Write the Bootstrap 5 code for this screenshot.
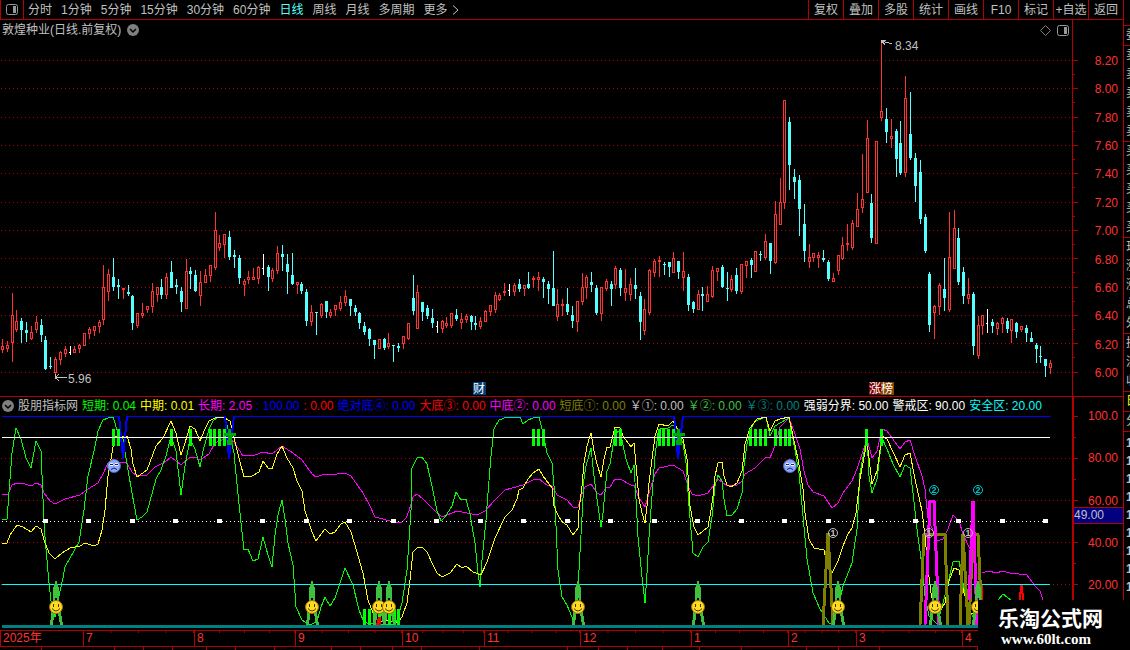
<!DOCTYPE html>
<html lang="zh-CN">
<head>
<meta charset="utf-8">
<meta name="viewport" content="width=device-width, initial-scale=1">
<title>敦煌种业 日线</title>
<link href="https://cdn.jsdelivr.net/npm/bootstrap@5.3.0/dist/css/bootstrap.min.css" rel="stylesheet">
<style>
:root{--line:#b40000;--ink:#c0c0c0;--up:#ff3232;--down:#54ffff}
body{background:#000;color:var(--ink);font:12px/16px "Liberation Sans","Noto Sans CJK SC",sans-serif;overflow:hidden}
.flat{background:none;border:0;padding:0;color:inherit;font:inherit;white-space:nowrap}
.topbar{height:20px;border-bottom:1px solid var(--line)}
.topbar .panelbtn{width:24px;border:1px solid var(--line);border-width:0 1px}
.periods{gap:9px;padding-left:4px}
.periods .on{color:var(--down)}
.tools .flat{width:35px;border-left:1px solid var(--line)}
.titlebar{height:18px;padding:2px 3px 0 2px;gap:6px}
.plot{min-width:0}
svg{display:block}
.plot>svg{width:100%;height:auto;overflow:visible;shape-rendering:crispEdges}
.plot text{font-size:12px}
.scale{width:51px;flex:none;border-left:1px solid var(--line);color:var(--up);text-align:right;line-height:12px}
.pricescale{padding:35px 5px 17px 0}
.indscale{border-left-width:2px;padding:13px 5px 39px 0}
.indicator{border-top:1px solid var(--line)}
.legend{height:17px;gap:4px;padding-left:2px;white-space:nowrap}
.cursor{top:110px;left:0;right:0;height:17px;line-height:15px;background:#000080;border:1px solid var(--line);border-width:1px 0;color:var(--ink);text-align:left}
.dates{height:17px;border:1px solid var(--line);border-width:1px 0;grid-template-columns:83fr 111fr 101fr 107fr 82fr 96fr 111fr 97fr 68fr 106fr 161fr;color:var(--up);line-height:15px}
.dates>span{border-left:1px solid var(--line);padding-left:2px;background:linear-gradient(to left,var(--line) 1px,transparent 1px) 0 0/25% 2px repeat-x}
.dates>span:first-child{background:none}
.foot{height:3px}
.foot i{border-right:1px solid var(--line)}
.side{width:7px;flex:none;border-left:1px solid var(--line);overflow:hidden;padding-top:25px}
.side>div{border-top:1px solid var(--line);padding-left:2px;width:20px;line-height:19px}
.side .one{line-height:18px;padding-top:2px;font-weight:bold}
.brand{right:0;bottom:0;width:152px;height:50px;background:#000;color:#fff;padding:6px 0 0 20px}
.brand .cn{font-size:21px;line-height:26px;font-weight:bold}
.brand .en{font:bold 15px/14px "Liberation Serif",serif;padding-left:3px}
</style>
</head>
<body>
<div class="d-flex position-relative">
<main class="flex-grow-1 plot">
  <nav class="topbar d-flex" aria-label="周期">
    <button class="flat panelbtn d-flex align-items-center justify-content-center" aria-label="面板"><svg width="12" height="11"><rect x=".5" y=".5" width="11" height="10" rx="2" fill="none" stroke="#999"/><path d="M7 2h3v7H7z" fill="#999"/></svg></button>
    <div class="periods d-flex align-items-center">
      <button class="flat">分时</button><button class="flat">1分钟</button><button class="flat">5分钟</button><button class="flat">15分钟</button><button class="flat">30分钟</button><button class="flat">60分钟</button><button class="flat on">日线</button><button class="flat">周线</button><button class="flat">月线</button><button class="flat">多周期</button><button class="flat d-flex align-items-center">更多<svg class="ms-1" width="7" height="10"><path d="M1 .5 6 5 1 9.500" fill="none" stroke="#c0c0c0"/></svg></button>
    </div>
    <div class="tools d-flex ms-auto">
      <button class="flat">复权</button><button class="flat">叠加</button><button class="flat">多股</button><button class="flat">统计</button><button class="flat">画线</button><button class="flat">F10</button><button class="flat">标记</button><button class="flat">+自选</button><button class="flat">返回</button>
    </div>
  </nav>

  <section class="d-flex">
    <div class="plot flex-grow-1">
      <div class="titlebar d-flex align-items-center">
        <span>敦煌种业(日线.前复权)</span>
        <button class="flat" aria-label="展开"><svg width="12" height="12"><circle cx="6" cy="6" r="6" fill="#808080"/><path d="M3 5l3 3 3-3" fill="none" stroke="#000" stroke-width="1.500"/></svg></button>
        <button class="flat ms-auto" aria-label="标志"><svg width="11" height="11"><path d="M5.500.5l5 5-5 5-5-5z" fill="none" stroke="#808080"/></svg></button>
        <button class="flat" aria-label="侧栏"><svg width="12" height="11"><rect x=".5" y=".5" width="11" height="10" rx="2" fill="none" stroke="#999"/><path d="M7 2h3v7H7z" fill="#999"/></svg></button>
      </div>
      <svg id="price" viewBox="0 38 1072 358" role="img" aria-label="日K线图">
        <g id="grid"></g><g id="candles"></g>
        <g fill="none" stroke="#c0c0c0"><path d="M881.500 43v-3M881 40.500h5M881 40.500l4 4M882 41l10 3"/><path d="M55.500 374v5M55 377.500h12M55 377.500l4-3M55 377.500l4 3"/></g>
        <g fill="#c0c0c0"><text x="895" y="50">8.34</text><text x="68" y="383">5.96</text></g>
        <path d="M473 382h12l1 1v12h-13z" fill="#003c78"/><path d="M869 382h12v13h-12z" fill="#800000"/><path d="M881 382h12l1 1v12h-13z" fill="#8a4500"/>
        <g fill="#fff"><text x="473" y="393">财</text><text x="869" y="393">涨</text><text x="881" y="393">榜</text></g>
      </svg>
    </div>
    <div class="scale pricescale d-flex flex-column justify-content-between">
      <span>8.20</span><span>8.00</span><span>7.80</span><span>7.60</span><span>7.40</span><span>7.20</span><span>7.00</span><span>6.80</span><span>6.60</span><span>6.40</span><span>6.20</span><span>6.00</span>
    </div>
  </section>

  <section class="indicator d-flex">
    <div class="plot flex-grow-1">
      <div class="legend d-flex align-items-center">
        <span class="d-flex align-items-center"><button class="flat me-1" aria-label="指标菜单"><svg width="12" height="12"><circle cx="6" cy="6" r="6" fill="#808080"/><path d="M3 5l3 3 3-3" fill="none" stroke="#000" stroke-width="1.500"/></svg></button>股朋指标网</span>
        <span style="color:#0f0">短期: 0.04</span><span style="color:#ff0">中期: 0.01</span><span style="color:#f0f">长期: 2.05</span><span style="color:#00f">: 100.00</span><span style="color:#f00">: 0.00</span><span style="color:#00f">绝对底④: 0.00</span><span style="color:#f00">大底③: 0.00</span><span style="color:#f0f">中底②: 0.00</span><span style="color:#808000">短底①: 0.00</span><span>￥①: 0.00</span><span style="color:#40c040">￥②: 0.00</span><span style="color:#008080">￥③: 0.00</span><span style="color:#fff">强弱分界: 50.00</span><span style="color:#fff">警戒区: 90.00</span><span style="color:#0ff">安全区: 20.00</span>
      </div>
      <svg id="osc" viewBox="0 414 1072 216" role="img" aria-label="指标图">
        <defs>
          <g id="legs" fill="#40c040"><path d="M-1 581h2v3h1v3h1v11l1 8h-3v-8h-2v8h-3l1-8v-11h1v-3h1z"/><path d="M-4 606h3l-2 19h-3zM4 606h-3l3 19h3z"/></g>
          <g id="smile" shape-rendering="auto"><circle r="6.500" fill="#ffdc20" stroke="#9a6a10"/><path d="M-3-3h1v3h-1zM2-3h1v3h-1z" fill="#403000"/><path d="M-4 1.500q4 5 8 0" fill="none" stroke="#403000"/></g>
          <g id="frown" shape-rendering="auto"><circle r="6.500" fill="#8ca8ff" stroke="#5068b8"/><ellipse cx="-2.500" cy="-1.500" rx="2" ry="1.500" fill="#fff"/><ellipse cx="2.500" cy="-1.500" rx="2" ry="1.500" fill="#fff"/><path d="M-4-2h3v1h-3zM1-2h3v1h-3z" fill="#102060"/><path d="M-3 3.500q3-3 6 0" fill="none" stroke="#102060"/></g>
        </defs>
        <path d="M1 458.500h1071M1 500.500h1071M1 542.500h1071M1 584.500h1071" stroke="#b40000" stroke-dasharray="1 3"/>
        <g id="lines" fill="none" stroke-linejoin="round">
          <path d="M2 416.500h116M127 416.500h97M234 416.500h439M683 416.500h368" stroke="#00f"/>
          <path d="M119 416l4 42 4-42M225 416l4 42 5-42M674 416l4 42 5-42" stroke="#00f" stroke-width="2"/>
        </g>
        <g id="bars" fill="#0f0"></g>
        <path d="M2 437.500h1048" stroke="#fff"/>
        <path d="M2 521.500h1048" stroke="#fff" stroke-dasharray="1 3"/>
        <g id="squares" fill="#fff"></g>
        <g fill="#0a0"><path d="M228 429h3v4h5v3h-4l1 9h-6l1-9h-4v-3h4zM677 429h3v4h5v3h-4l1 9h-6l1-9h-4v-3h4z"/></g>
        <path d="M2 584.500h1048" stroke="#0ff"/>
        <path d="M376 625l2-8h3v8zM1019 600l1-15h3l1 15h-2v-6h-1v6zM981 585h2v15h-2z" fill="#f00"/>
        <g fill="none" stroke-width="3"><path d="M823 625l5-92 5 92M920 625l4-91h21l3 91M960 625l3-91 5 91M969 625l4-91h5l4 91" stroke="#808000"/><path d="M925 625l5-124h4l5 124M969 600l4-99 4 124" stroke="#f0f"/></g>
        <g id="figures"></g>
        <use href="#frown" x="114" y="466"/><use href="#frown" x="790" y="466"/>
        <path d="M2 625h1048v3H2z" fill="#008080"/>
        <g id="marks" fill="none" shape-rendering="auto"></g>
      </svg>
    </div>
    <div class="scale indscale position-relative d-flex flex-column justify-content-between">
      <span>100.0</span><span>80.00</span><span>60.00</span><span>40.00</span><span>20.00</span>
      <div class="cursor position-absolute">49.00</div>
    </div>
  </section>

  <div class="dates d-grid">
    <span>2025年</span><span>7</span><span>8</span><span>9</span><span>10</span><span>11</span><span>12</span><span>1</span><span>2</span><span>3</span><span>4</span>
  </div>
  <div class="foot d-flex" id="foot" aria-hidden="true"></div>
</main>
<aside class="side" aria-label="盘口">
  <div>委</div><div>卖<br>卖<br>卖<br>卖<br>卖</div><div>买<br>买<br>买<br>买<br>买</div><div>现<br>涨<br>涨<br>总<br>外</div><div>换<br>流<br>收</div><div style="color:#ff0">日</div><div>分</div><div class="one">1<br>1<br>1<br>1<br>1<br>1<br>1<br>1<br>1</div>
</aside>
<div class="brand position-absolute"><div class="cn">乐淘公式网</div><div class="en">www.60lt.com</div></div>
</div>

<script src="https://cdn.jsdelivr.net/npm/bootstrap@5.3.0/dist/js/bootstrap.bundle.min.js"></script>
<script>
const $ = id => document.getElementById(id);
const barX = i => Math.floor(2.5 + 4.83 * i);

// Grid lines and scale ticks
const levels = [60,88,117,145,173,202,230,258,287,315,343,372];
$('grid').innerHTML = `<path d="${levels.map(y => `M1 ${y}.5H1072`).join('')}" stroke="#b40000" stroke-dasharray="1 3"/>` +
  `<path d="${levels.map((y,i) => `M1073 ${y}.5h5` + (i < 11 ? `M1073 ${y+14}.5h2` : '')).join('')}" stroke="#b40000"/>`;

// One candle: colour, then high, body top, body bottom, low
const candles = `r339,346,350,353 r341,345,349,352 r293,315,343,362 r310,321,330,332 c318,321,330,343 c322,330,333,342 r326,332,339,340 r316,322,330,333 c319,325,335,342 c336,340,369,370
c357,366,367,369 r357,359,373,376 r351,352,360,365 r346,349,354,357 w346,352,353,355 r346,349,353,353 r344,345,349,353 r333,333,346,346 r327,329,334,339 r326,326,331,336
r320,322,327,333 r265,287,320,325 r269,274,292,301 c258,277,287,291 c279,285,287,299 r288,288,290,299 c285,292,294,296 c295,296,323,330 r313,313,326,328 r303,313,316,318
r306,306,310,313 r283,291,307,313 r287,287,295,302 c279,287,295,299 r273,277,295,299 c261,272,288,288 c279,285,287,294 c287,291,302,312 r259,271,309,309 c267,271,274,289
c270,275,291,292 r271,282,296,306 r269,275,283,283 r265,265,276,282 r212,230,268,270 r235,243,248,251 r234,234,245,258 c231,237,257,260 c250,255,257,268 c255,258,278,284
r279,281,285,296 r271,277,280,284 r268,277,280,280 r266,267,279,284 w254,268,269,275 c265,267,277,291 r268,270,279,282 r246,253,271,274 c245,254,257,271 c254,264,272,294
c253,275,284,285 r282,282,285,294 c282,284,291,294 c289,292,321,326 r305,312,322,326 c312,312,313,335 r303,304,316,318 c301,301,312,318 r309,312,316,318 r305,305,310,316
r296,302,309,311 r290,296,303,306 c299,299,306,316 c305,308,312,316 c312,313,323,329 c322,326,332,335 c328,329,339,346 c340,340,345,359 r339,339,349,349 c338,339,348,350
r333,343,347,349 c345,345,346,362 c343,346,348,352 r336,336,344,349 r323,323,339,340 c275,298,311,315 r285,292,329,329 c302,302,312,321 c305,308,316,319 c309,318,323,328
w321,326,327,333 r320,321,329,333 r317,323,326,328 r313,313,326,328 c309,315,319,321 r313,319,323,329 r314,316,320,323 c315,316,322,330 c316,323,325,330 r317,321,327,329
r310,311,322,322 r305,305,312,316 r292,295,310,313 r293,295,300,301 r283,291,293,296 w284,290,291,296 r283,285,292,296 c279,284,289,292 r285,285,289,296 c272,284,288,289
r276,278,280,288 r272,277,280,291 c277,279,282,298 c281,284,289,304 c251,288,306,306 r289,304,317,321 r299,304,306,316 c288,304,312,315 c306,315,321,328 r301,301,322,332
r273,287,302,305 r275,277,288,299 c272,282,285,292 c285,288,313,315 r287,287,314,321 r279,281,289,291 c281,284,289,306 r266,268,285,289 c268,270,288,296 r269,288,293,301
r278,284,295,301 c268,285,289,299 c292,296,322,340 r299,309,331,335 r269,270,313,315 r259,261,273,277 r256,260,262,277 c262,264,265,275 c262,262,267,277 r252,258,273,273
c261,261,272,279 r252,271,278,291 c274,277,305,311 c301,302,309,313 r290,294,310,310 c287,294,296,311 r286,294,302,302 r266,270,297,298 r268,268,272,281 c265,267,287,288
c272,288,289,301 r275,279,290,292 c268,275,291,294 r264,264,292,294 r261,261,266,278 c258,260,265,278 r251,251,272,272 c251,254,255,261 r234,241,258,260 c243,243,261,274
r201,214,263,264 r178,202,225,225 r100,100,203,209 c117,122,165,190 c169,177,182,199 c175,180,209,236 c204,224,251,262 r244,257,262,268 r253,253,258,262 r252,255,258,268
c250,258,260,262 c260,262,279,281 r273,278,282,282 r255,255,271,275 r237,245,259,260 r224,243,245,251 r220,223,248,250 r193,209,227,227 r154,199,208,213 r120,138,193,193
c194,203,238,243 r141,141,244,244 r43,111,118,121 c108,119,132,143 r119,136,139,148 c129,131,159,177 c121,143,173,175 r76,98,173,177 c92,134,158,160 c153,158,186,202
c160,172,219,224 c214,217,251,253 c272,274,325,332 r305,306,313,339 r283,285,307,315 c258,289,298,311 r212,257,310,312 r210,228,269,269 c228,238,282,285 c267,272,296,304
r278,294,299,304 c292,294,346,355 r316,325,356,359 r315,315,326,335 w309,323,324,333 c319,322,326,333 r322,323,329,335 r317,318,324,333 c318,321,329,333 r319,319,331,343
c322,323,332,338 r326,326,330,332 c325,328,333,342 c332,338,342,342 c343,345,349,363 c346,356,357,363 c359,359,366,377 r360,363,368,374`.split(/\s+/);
const ink = {r:'#ff3232', c:'#54ffff', w:'#ffffff'};
$('candles').innerHTML = candles.map((s, i) => {
  const k = s[0], [h, t, b, l] = s.slice(1).split(',').map(Number), x = barX(i), f = ink[k];
  if (k === 'w') return `<path d="M${x} ${h}h1V${l}h-1zM${x-1} ${t}h1v1h-1z" fill="${f}"/>`;
  if (k === 'c') return `<path d="M${x} ${h}h1V${l}h-1zM${x-1} ${t}h3V${b}h-3z" fill="${f}"/>`;
  return `<path d="M${x} ${h}h1V${t}h-1zM${x} ${b}h1V${l}h-1z" fill="${f}"/><path d="M${x-.5} ${t+.5}h2V${Math.max(b-.5,t+.5)}h-2z" fill="none" stroke="${f}"/>`;
}).join('');

// Oscillator curves
const curves = {
 '#f0f': ['2,494 8,494 12,485 17,483 22,483 31,486 36,483 41,485 44,493 50,501 55,504 65,499 80,495 88,489 98,483 103,474 108,463 113,459 119,462 127,463 132,472 137,476 147,475 155,467 165,462 171,457 181,465 190,457 195,457 200,460 209,454 215,443 229,437 234,442 243,456 255,455 263,452 272,454 282,446 293,453 302,460 312,474 316,477 325,474 330,475 345,473 351,476 363,493 370,506 375,517 383,519 393,522 402,522 406,518 409,511 413,497 417,494 423,499 437,513 442,517 457,511 477,515 485,511 494,501 505,490 523,485 533,480 539,479 547,485 552,486 557,495 567,500 573,507 578,507 582,494 585,487 591,484 597,493 601,495 606,488 610,487 615,479 620,479 631,485 634,485 638,496 645,507 649,493 655,474 659,468 673,465 683,471 688,486 692,494 698,496 708,493 713,486 718,479 727,486 737,485 742,481 745,474 755,468 766,457 770,458 775,446 780,427 789,418 795,434 800,449 804,471 808,485 813,492 824,496 832,508 838,503 843,493 852,481 857,469 862,454 867,439 872,458 877,451 882,429 887,431 900,449 905,442 910,440 915,456 922,476 925,489 928,518 935,536 937,541 943,539 948,529 953,515 959,521 963,534 970,549', '982,573 988,571 997,573 1002,571 1010,573 1027,575 1035,586 1040,591 1043,600'],
 '#0f0': ['2,519 7,519 12,453 16,428 21,439 26,458 31,468 36,441 41,451 44,523 45,537 49,583 51,601 55,617 58,600 63,578 65,567 70,558 79,542 84,510 88,476 94,451 98,431 103,420 108,418 113,417 118,433 123,439 127,464 132,493 137,520 142,517 147,512 156,479 161,470 166,456 171,436 176,451 181,495 185,466 190,439 195,449 200,467 203,451 209,429 213,421 218,417 225,417 229,433 234,453 237,484 241,523 244,550 248,549 253,561 258,559 263,537 268,555 272,567 275,535 278,515 282,500 285,519 288,543 293,565 296,607 302,620 309,625 317,622 321,607 325,597 330,606 335,598 345,568 353,585 359,610 363,620 367,623 380,624 395,624 397,620 402,603 407,570 411,510 412,468 417,458 422,457 427,464 432,486 437,511 441,521 445,517 452,506 456,492 461,500 466,499 470,514 472,526 475,543 478,573 480,587 482,560 486,520 488,493 491,456 494,429 499,420 507,417 520,417 523,424 528,420 533,418 539,417 543,433 547,453 552,463 554,486 556,526 558,570 562,597 567,605 572,617 574,622 577,610 579,570 582,517 584,479 586,466 591,448 594,476 597,499 601,527 603,513 607,471 610,464 615,433 620,431 626,459 631,473 634,465 636,499 638,537 642,577 645,603 647,573 649,537 652,496 655,456 658,433 661,428 668,428 673,425 677,429 683,443 686,463 689,506 693,553 698,557 703,547 708,542 712,517 715,486 718,475 722,481 724,499 727,516 732,515 737,509 742,493 744,466 747,444 751,429 755,421 766,417 770,436 775,426 780,423 789,418 793,439 799,473 803,516 807,559 813,593 820,609 829,623 832,624 838,609 843,586 852,563 857,529 860,473 867,436 869,476 872,493 877,479 882,438 887,449 893,464 900,477 905,465 910,468 913,493 917,529 922,566 925,596 929,616 937,624 943,603 948,583 953,562 959,561 964,589 968,609 975,620', '998,600 1003,594 1011,600'],
 '#ff0': ['2,543 7,543 10,535 17,525 23,527 31,532 36,526 41,529 44,540 49,553 55,559 62,553 70,548 80,546 85,543 94,546 98,544 102,530 105,510 108,476 112,453 115,436 127,436 131,449 133,464 137,477 147,470 156,446 163,438 171,421 176,433 181,455 185,443 190,426 195,429 200,441 205,429 209,421 215,418 223,417 230,421 234,438 239,458 244,477 252,476 259,472 263,461 268,468 272,469 277,454 282,446 287,458 293,468 297,481 302,491 305,511 312,532 316,541 325,529 330,534 335,532 341,524 345,522 351,532 357,552 363,573 368,600 373,613 378,622 388,620 393,622 397,623 402,617 407,603 410,580 413,552 418,547 423,548 427,552 433,565 437,573 442,577 450,573 457,564 462,568 466,566 473,572 481,575 487,562 495,538 505,517 512,510 517,499 519,490 523,488 528,479 533,473 539,469 543,476 552,488 554,506 557,513 562,522 567,525 573,535 578,528 579,510 582,486 584,463 587,446 591,433 594,451 597,464 601,477 604,459 607,447 610,447 615,427 620,428 623,436 631,447 634,443 637,476 639,499 642,513 645,523 647,506 649,483 652,459 655,436 659,424 668,426 673,421 677,428 683,439 687,459 690,506 694,527 698,535 703,531 708,527 711,510 713,496 715,476 718,463 722,462 724,476 727,485 731,487 737,483 742,471 745,444 750,428 757,419 766,417 770,431 775,421 780,419 789,417 793,436 798,459 803,489 805,513 809,539 814,548 824,550 826,559 832,573 838,561 843,546 848,534 852,528 856,513 860,479 867,441 872,484 877,471 882,436 887,439 900,467 905,455 910,453 915,479 922,511 925,536 928,569 931,593 935,613 940,611 945,603 949,581 954,568 959,570 964,593 970,613 973,614']
};
$('lines').insertAdjacentHTML('afterbegin', Object.entries(curves).map(([c, ls]) => ls.map(p => `<polyline points="${p}" stroke="${c}"/>`).join('')).join(''));

const rect = (x, y, w, h) => `<rect x="${x}" y="${y}" width="${w}" height="${h}"/>`;
$('bars').innerHTML = [112,117,170,189,209,213,218,223,532,537,542,614,619,658,662,667,672,749,754,759,764,774,779,784,788,865,880].map(x => rect(x,429,3,17)).join('') +
  [363,368,373,378,383,388,393,397].map(x => rect(x,609,3,17)).join('');
$('squares').innerHTML = Array.from({length:24}, (_, i) => rect(Math.round(43 + 43.48 * i),519,5,4)).join('');
$('figures').innerHTML = [56,312,379,389,578,698,838,935,978].map(x => `<use href="#legs" x="${x}"/><use href="#smile" x="${x}" y="607"/>`).join('');
$('marks').innerHTML = [[934,490,2,'#00c8c8'],[978,490,2,'#00c8c8'],[833,533,1,'#c0c0c0'],[929,533,1,'#c0c0c0'],[968,533,1,'#c0c0c0']].map(([x,y,n,c]) =>
  `<circle cx="${x}" cy="${y}" r="4.5" stroke="${c}"/><text x="${x}" y="${y+3}" text-anchor="middle" style="font-size:9px;font-weight:bold" fill="${c}">${n}</text>`).join('') +
  `<path d="${[416,458,500,542,584].map(y => `M1074 ${y}.5h4M1074 ${y+21}.5h2`).join('')}" stroke="#b40000"/>`;

// Bottom tab edges
const edges = [0,42,115,144,173,207,236,275,332,361,393,422,480,568,599,628,663,700,742,807,839,880,978];
$('foot').innerHTML = edges.slice(1).map((e, i) => `<i style="width:${(e - edges[i]) / 11.23}%"></i>`).join('');
</script>
</body>
</html>
